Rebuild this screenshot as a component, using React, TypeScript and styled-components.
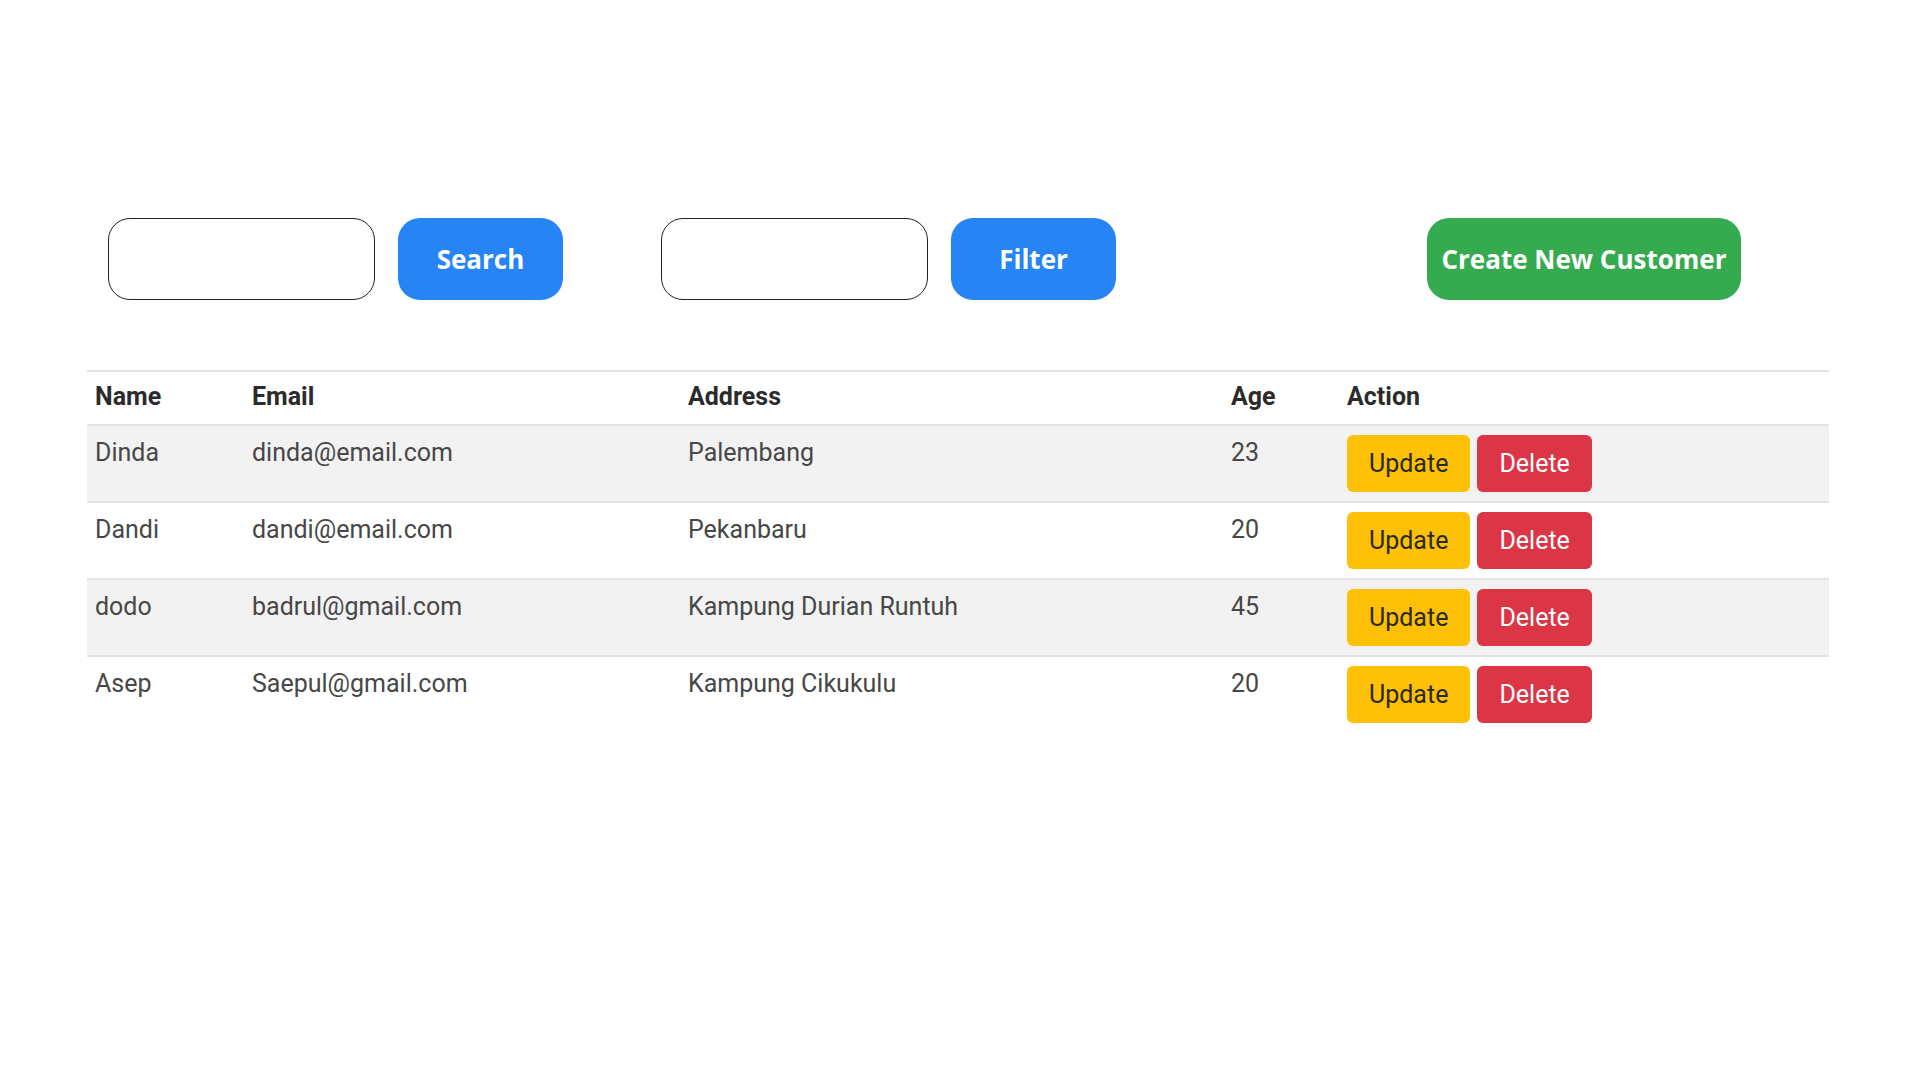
import React from 'react';
import styled, { createGlobalStyle } from 'styled-components';

const GlobalStyle = createGlobalStyle`
  body {
    margin: 0;
    background: #ffffff;
    font-family: Roboto, 'Liberation Sans', sans-serif;
  }
`;

const Page = styled.div`
  width: 1920px;
  height: 1080px;
  padding-top: 218px;
  box-sizing: border-box;
`;

const Toolbar = styled.div`
  display: flex;
  align-items: center;
  padding-left: 108px;
  height: 82px;
`;

const Group = styled.div`
  display: flex;
  align-items: center;
  gap: 23px;
  margin-right: 98px;
`;

const TextInput = styled.input`
  width: 267px;
  height: 82px;
  box-sizing: border-box;
  border: 1.5px solid #222;
  border-radius: 22px;
  background: #fff;
  padding: 0 16px;
  font-size: 22px;
  outline: none;
`;

const PillButton = styled.button<{ $color: string; $width: number }>`
  width: ${p => p.$width}px;
  height: 82px;
  border: none;
  border-radius: 22px;
  background: ${p => p.$color};
  color: #fff;
  font-family: 'Open Sans', sans-serif;
  font-weight: 700;
  font-size: 26px;
  cursor: pointer;
`;

const CreateButton = styled(PillButton)`
  margin-left: 213px;
`;

const Table = styled.table`
  margin: 70px 0 0 87px;
  width: 1742px;
  border-collapse: collapse;
  font-size: 25px;
  line-height: 36px;
  color: #474747;

  col.name { width: 157px; }
  col.email { width: 436px; }
  col.address { width: 543px; }
  col.age { width: 116px; }
`;

const HeadCell = styled.th`
  text-align: left;
  font-weight: 700;
  color: #2b2b2b;
  padding: 7px 8px 9px;
  border-top: 2px solid #e3e3e3;
  border-bottom: 2px solid #e3e3e3;
`;

const Row = styled.tr<{ $striped: boolean }>`
  background: ${p => (p.$striped ? '#f2f2f2' : '#ffffff')};
  & + & {
    border-top: 2px solid #e3e3e3;
  }
`;

const Cell = styled.td`
  vertical-align: top;
  padding: 9px 8px 6px;
`;

const Actions = styled.div`
  display: flex;
  gap: 7px;
  margin-bottom: 3px;
`;

const ActionButton = styled.button<{ $variant: 'update' | 'delete' }>`
  height: 57px;
  padding: 0 22px;
  border: none;
  border-radius: 6px;
  font-family: Roboto, 'Liberation Sans', sans-serif;
  font-size: 25px;
  background: ${p => (p.$variant === 'update' ? '#ffc107' : '#dc3545')};
  color: ${p => (p.$variant === 'update' ? '#2a2a10' : '#ffffff')};
  cursor: pointer;
`;

const customers = [
  { name: 'Dinda', email: 'dinda@email.com', address: 'Palembang', age: 23 },
  { name: 'Dandi', email: 'dandi@email.com', address: 'Pekanbaru', age: 20 },
  { name: 'dodo', email: 'badrul@gmail.com', address: 'Kampung Durian Runtuh', age: 45 },
  { name: 'Asep', email: 'Saepul@gmail.com', address: 'Kampung Cikukulu', age: 20 },
];

const App: React.FC = () => {
  return (
    <Page>
      <GlobalStyle />
      <Toolbar>
        <Group>
          <TextInput />
          <PillButton $color="#2684f5" $width={165}>Search</PillButton>
        </Group>
        <Group>
          <TextInput />
          <PillButton $color="#2684f5" $width={165}>Filter</PillButton>
        </Group>
        <CreateButton $color="#35aa4f" $width={314}>Create New Customer</CreateButton>
      </Toolbar>

      <Table>
        <colgroup>
          <col className="name" />
          <col className="email" />
          <col className="address" />
          <col className="age" />
          <col />
        </colgroup>
        <thead>
          <tr>
            <HeadCell>Name</HeadCell>
            <HeadCell>Email</HeadCell>
            <HeadCell>Address</HeadCell>
            <HeadCell>Age</HeadCell>
            <HeadCell>Action</HeadCell>
          </tr>
        </thead>
        <tbody>
          {customers.map((c, i) => (
            <Row key={c.email} $striped={i % 2 === 0}>
              <Cell>{c.name}</Cell>
              <Cell>{c.email}</Cell>
              <Cell>{c.address}</Cell>
              <Cell>{c.age}</Cell>
              <Cell>
                <Actions>
                  <ActionButton $variant="update">Update</ActionButton>
                  <ActionButton $variant="delete">Delete</ActionButton>
                </Actions>
              </Cell>
            </Row>
          ))}
        </tbody>
      </Table>
    </Page>
  );
};

export default App;
